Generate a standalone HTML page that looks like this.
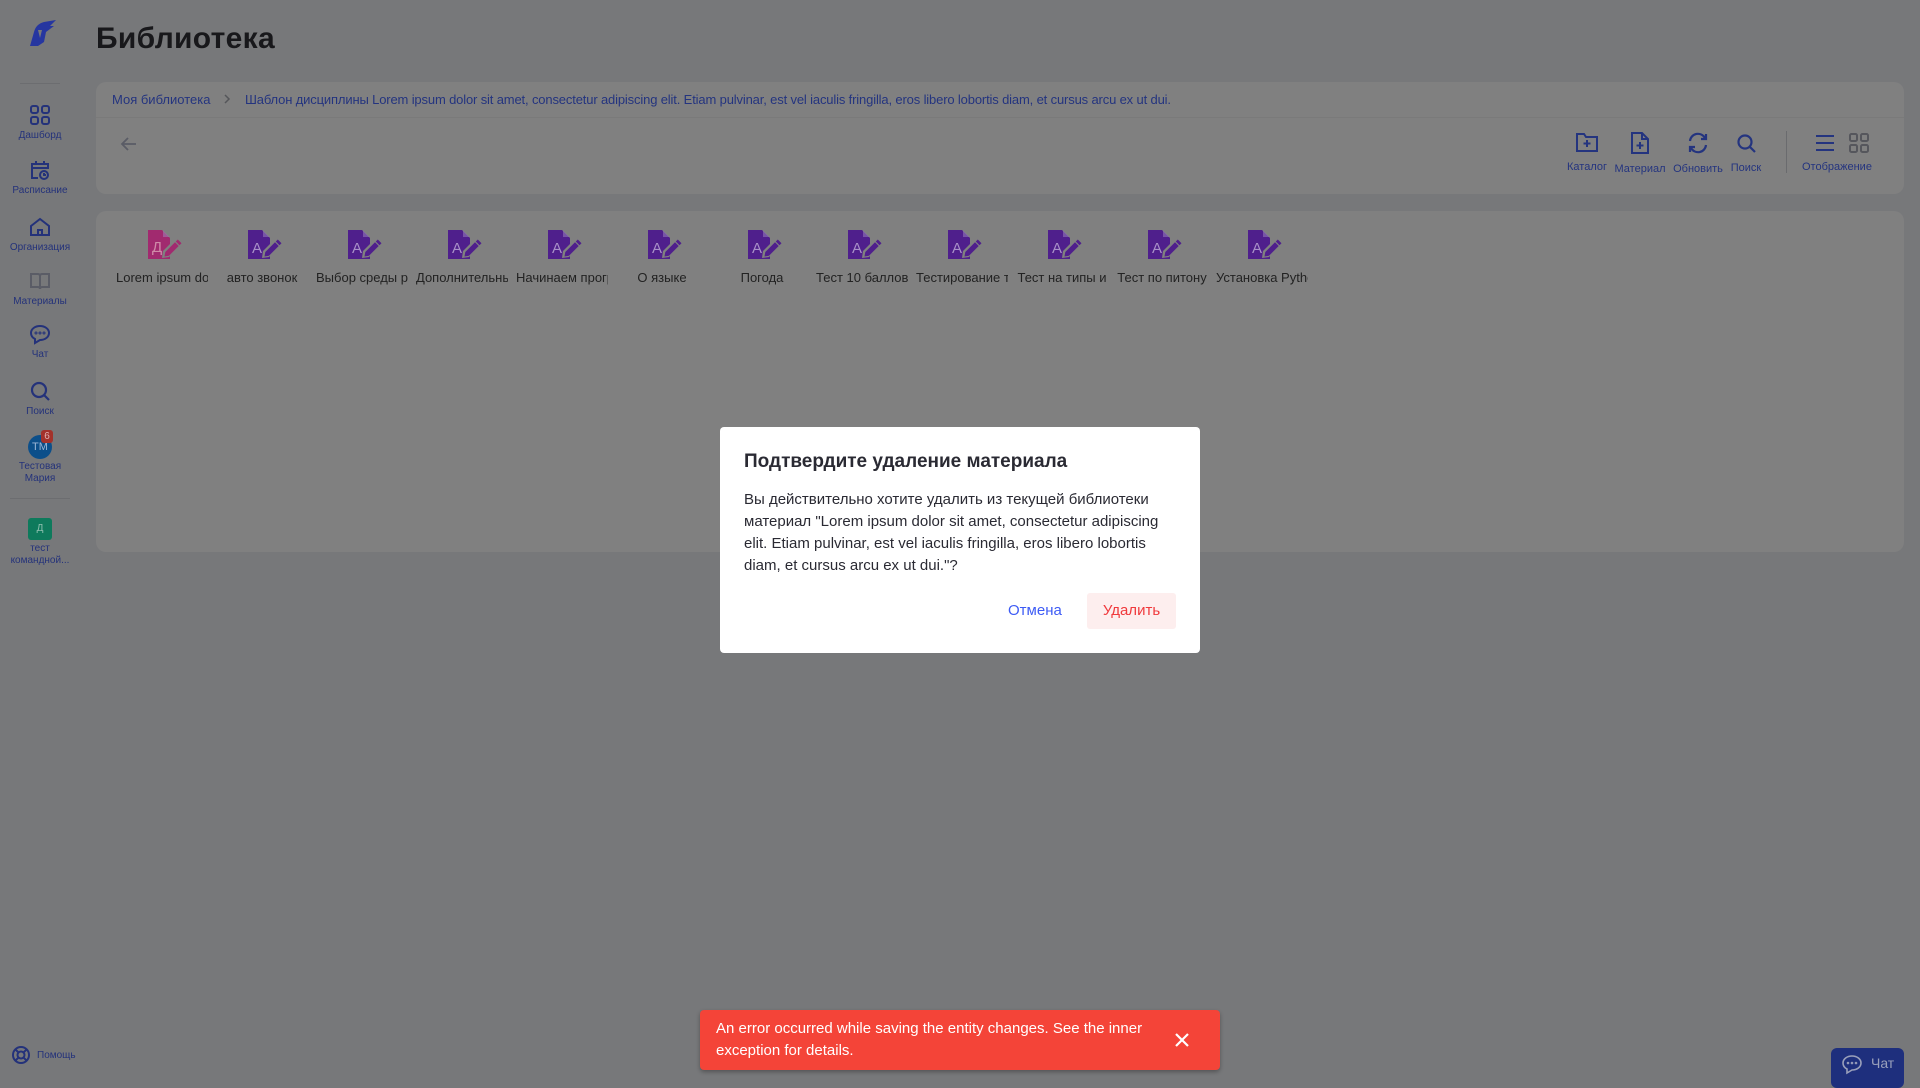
<!DOCTYPE html>
<html><head><meta charset="utf-8"><style>
*{box-sizing:border-box;margin:0;padding:0}
body{width:1920px;height:1080px;background:#77787a;font-family:"Liberation Sans","Noto Sans CJK SC",sans-serif;position:relative;overflow:hidden;color:#1b1b1f}
.abs{position:absolute}
.side{position:absolute;left:0;top:0;width:80px;height:1080px}
.si{position:absolute;left:0;width:80px;text-align:center;font-size:10px;color:#24327a}
.si svg{display:block;margin:0 auto 4px}
.card{position:absolute;left:96px;width:1808px;background:#808080;border-radius:10px}
.bc{position:absolute;top:92px;font-size:13px;color:#24347f}
.tb{position:absolute;top:130px;text-align:center;font-size:11px;color:#24347f}
.tb svg{display:block;margin:0 auto 8px}
.item{position:absolute;top:230px;width:96px;text-align:center}
.item svg{display:block;margin-left:34px}
.item .lbl{font-size:13px;color:#222;white-space:nowrap;overflow:hidden;width:92px;margin:10px auto 0}
</style></head><body>
<div class="side">
 <svg class="abs" style="left:24px;top:18px" width="34" height="30" viewBox="0 0 34 30"><path d="M6 28 L10 14 Q12 6 20 4 L32 2 L26 8 L30 8 L22 14 L20 24 L14 28 Z" fill="#2636a0"/><path d="M14 12 L18 12 L16 20Z" fill="#77787a"/></svg>
 <div class="abs" style="left:20px;top:83px;width:40px;height:1px;background:#6c6d70"></div>
 <div class="si" style="top:104px"><svg width="22" height="22" viewBox="0 0 22 22" fill="none" stroke="#24327a" stroke-width="2"><rect x="2" y="2" width="7" height="7" rx="2"/><rect x="13" y="2" width="7" height="7" rx="2"/><rect x="2" y="13" width="7" height="7" rx="2"/><rect x="13" y="13" width="7" height="7" rx="2"/></svg>Дашборд</div>
 <div class="si" style="top:159px"><svg width="22" height="22" viewBox="0 0 22 22" fill="none" stroke="#24327a" stroke-width="2"><path d="M9 19H3V5h16v5M3 9h16M7 2v4M15 2v4"/><circle cx="15" cy="16" r="4"/><path d="M15 14v2h2"/></svg>Расписание</div>
 <div class="si" style="top:216px"><svg width="22" height="22" viewBox="0 0 22 22" fill="none" stroke="#24327a" stroke-width="2"><path d="M2 10 L11 3 L20 10 V19 H2Z"/><path d="M9 19v-5h4v5"/></svg>Организация</div>
 <div class="si" style="top:270px"><svg width="22" height="22" viewBox="0 0 22 22" fill="none" stroke="#5a5c66" stroke-width="2"><path d="M2 4h7q2 0 2 2v13q0-2-2-2H2zM20 4h-7q-2 0-2 2v13q0-2 2-2h7z"/></svg>Материалы</div>
 <div class="si" style="top:323px"><svg width="22" height="22" viewBox="0 0 22 22" fill="none" stroke="#24327a" stroke-width="2"><path d="M11 3c5 0 9 3 9 7s-4 7-9 7l-5 3v-4c-2-1-4-3-4-6 0-4 4-7 9-7z"/><circle cx="7" cy="10" r=".5"/><circle cx="11" cy="10" r=".5"/><circle cx="15" cy="10" r=".5"/></svg>Чат</div>
 <div class="si" style="top:380px"><svg width="22" height="22" viewBox="0 0 22 22" fill="none" stroke="#24327a" stroke-width="2.2"><circle cx="10" cy="10" r="7"/><path d="M15 15l5 5"/></svg>Поиск</div>
 <div class="abs" style="left:28px;top:435px;width:24px;height:24px;border-radius:50%;background:#0c4f8a;color:#9cb6d6;font-size:11px;line-height:24px;text-align:center">ТМ</div>
 <div class="abs" style="left:41px;top:430px;width:12px;height:13px;border-radius:3px;background:#a3322b;color:#e0b0b0;font-size:10px;line-height:13px;text-align:center">6</div>
 <div class="si" style="top:461px;line-height:12px">Тестовая<br>Мария</div>
 <div class="abs" style="left:10px;top:498px;width:60px;height:1px;background:#6c6d70"></div>
 <div class="abs" style="left:28px;top:518px;width:24px;height:22px;border-radius:3px;background:#0e7a5c;color:#8fc0b0;font-size:10px;line-height:22px;text-align:center">Д</div>
 <div class="si" style="top:543px;line-height:12px">тест<br>командной...</div>
 <svg class="abs" style="left:11px;top:1045px" width="20" height="20" viewBox="0 0 20 20" fill="none" stroke="#24327a" stroke-width="2"><circle cx="10" cy="10" r="8"/><circle cx="10" cy="10" r="3.5"/><path d="M4 4l3.5 3.5M16 4l-3.5 3.5M4 16l3.5-3.5M16 16l-3.5-3.5"/></svg>
 <div class="abs" style="left:37px;top:1050px;font-size:10px;color:#24327a">Помощь</div>
</div>
<div class="abs" style="left:96px;top:22px;font-size:30px;font-weight:bold;color:#18181b;letter-spacing:0.3px">Библиотека</div>
<div class="card" style="top:82px;height:112px">
 <div class="abs" style="left:0;top:35px;width:1808px;height:1px;background:#7a7a7a"></div>
 <svg class="abs" style="left:24px;top:53px" width="18" height="18" viewBox="0 0 18 18" fill="none" stroke="#5a5c66" stroke-width="1.8"><path d="M16 9H2M8 3L2 9l6 6"/></svg>
</div>
<div class="bc" style="left:112px">Моя библиотека</div>
<svg class="abs" style="left:222px;top:93px" width="10" height="12" viewBox="0 0 10 12" fill="none" stroke="#55565a" stroke-width="1.5"><path d="M3 2l4 4-4 4"/></svg>
<div class="bc" style="left:245px;letter-spacing:-0.15px">Шаблон дисциплины Lorem ipsum dolor sit amet, consectetur adipiscing elit. Etiam pulvinar, est vel iaculis fringilla, eros libero lobortis diam, et cursus arcu ex ut dui.</div>
<div class="tb" style="left:1562px;width:50px;top:131px"><svg width="24" height="22" viewBox="0 0 24 22" fill="none" stroke="#24347f" stroke-width="2"><path d="M2 3h7l2 3h11v14H2z"/><path d="M12 9v7M8.5 12.5h7"/></svg>Каталог</div>
<div class="tb" style="left:1612px;width:56px;top:131px"><svg width="22" height="24" viewBox="0 0 22 24" fill="none" stroke="#24347f" stroke-width="2"><path d="M3 2h10l6 6v14H3z"/><path d="M13 2v6h6M11 11v7M7.5 14.5h7"/></svg>Материал</div>
<div class="tb" style="left:1672px;width:52px;top:131px"><svg width="26" height="24" viewBox="0 0 26 24" fill="none" stroke="#24347f" stroke-width="2.2"><path d="M5 10a8 8 0 0 1 15-3M21 14a8 8 0 0 1-15 3"/><path d="M21 3v5h-5M5 21v-5h5"/></svg>Обновить</div>
<div class="tb" style="left:1728px;width:36px;top:132px"><svg width="22" height="22" viewBox="0 0 22 22" fill="none" stroke="#24347f" stroke-width="2.2"><circle cx="10" cy="10" r="6.5"/><path d="M15 15l5 5"/></svg>Поиск</div>
<div class="abs" style="left:1786px;top:131px;width:1px;height:42px;background:#6a6b6e"></div>
<svg class="abs" style="left:1814px;top:133px" width="24" height="20" viewBox="0 0 24 20" stroke="#24347f" stroke-width="2"><path d="M2 3h18M2 10h18M2 17h18"/></svg>
<svg class="abs" style="left:1849px;top:133px" width="20" height="20" viewBox="0 0 20 20" fill="none" stroke="#55565c" stroke-width="2"><rect x="1" y="1" width="7" height="7" rx="1.5"/><rect x="12" y="1" width="7" height="7" rx="1.5"/><rect x="1" y="12" width="7" height="7" rx="1.5"/><rect x="12" y="12" width="7" height="7" rx="1.5"/></svg>
<div class="abs" style="left:1802px;top:161px;font-size:11px;color:#24347f">Отображение</div>
<div class="card" style="top:211px;height:341px"></div>
<svg width="0" height="0" style="position:absolute"><defs>
<symbol id="doc" viewBox="0 0 34 30"><path d="M0 0h14l8 8v21H0z" fill="currentColor"/><path d="M15 0.5l6.5 6.5h-6.5z" fill="#a08cc0" opacity=".5"/><path d="M14 28l1-7 12-12 6 6-12 12z" fill="#808080"/><path d="M16.5 26.5l0.8-4.5 9.7-9.7 3.7 3.7-9.7 9.7z M27.8 11.5l2-2 3.7 3.7-2 2z" fill="currentColor"/></symbol></defs></svg>
<div class="item" style="left:114px"><svg width="34" height="30" style="color:#a12a6f"><use href="#doc"/></svg><div style="position:absolute;left:38px;top:9px;font-size:15px;color:#cf8aa8">Д</div><div class="lbl">Lorem ipsum dolor</div></div>
<div class="item" style="left:214px"><svg width="34" height="30" style="color:#4f1f8c"><use href="#doc"/></svg><div style="position:absolute;left:38px;top:10px;font-size:15px;color:#a890c8">A</div><div class="lbl">авто звонок</div></div>
<div class="item" style="left:314px"><svg width="34" height="30" style="color:#4f1f8c"><use href="#doc"/></svg><div style="position:absolute;left:38px;top:10px;font-size:15px;color:#a890c8">A</div><div class="lbl">Выбор среды разработки</div></div>
<div class="item" style="left:414px"><svg width="34" height="30" style="color:#4f1f8c"><use href="#doc"/></svg><div style="position:absolute;left:38px;top:10px;font-size:15px;color:#a890c8">A</div><div class="lbl">Дополнительные</div></div>
<div class="item" style="left:514px"><svg width="34" height="30" style="color:#4f1f8c"><use href="#doc"/></svg><div style="position:absolute;left:38px;top:10px;font-size:15px;color:#a890c8">A</div><div class="lbl">Начинаем программировать</div></div>
<div class="item" style="left:614px"><svg width="34" height="30" style="color:#4f1f8c"><use href="#doc"/></svg><div style="position:absolute;left:38px;top:10px;font-size:15px;color:#a890c8">A</div><div class="lbl">О языке</div></div>
<div class="item" style="left:714px"><svg width="34" height="30" style="color:#4f1f8c"><use href="#doc"/></svg><div style="position:absolute;left:38px;top:10px;font-size:15px;color:#a890c8">A</div><div class="lbl">Погода</div></div>
<div class="item" style="left:814px"><svg width="34" height="30" style="color:#4f1f8c"><use href="#doc"/></svg><div style="position:absolute;left:38px;top:10px;font-size:15px;color:#a890c8">A</div><div class="lbl">Тест 10 баллов</div></div>
<div class="item" style="left:914px"><svg width="34" height="30" style="color:#4f1f8c"><use href="#doc"/></svg><div style="position:absolute;left:38px;top:10px;font-size:15px;color:#a890c8">A</div><div class="lbl">Тестирование текста</div></div>
<div class="item" style="left:1014px"><svg width="34" height="30" style="color:#4f1f8c"><use href="#doc"/></svg><div style="position:absolute;left:38px;top:10px;font-size:15px;color:#a890c8">A</div><div class="lbl">Тест на типы и</div></div>
<div class="item" style="left:1114px"><svg width="34" height="30" style="color:#4f1f8c"><use href="#doc"/></svg><div style="position:absolute;left:38px;top:10px;font-size:15px;color:#a890c8">A</div><div class="lbl">Тест по питону</div></div>
<div class="item" style="left:1214px"><svg width="34" height="30" style="color:#4f1f8c"><use href="#doc"/></svg><div style="position:absolute;left:38px;top:10px;font-size:15px;color:#a890c8">A</div><div class="lbl">Установка Python</div></div>

<div class="abs" style="left:720px;top:427px;width:480px;height:226px;background:#fff;border-radius:4px">
 <div class="abs" style="left:24px;top:24px;font-size:19px;font-weight:bold;color:#2a2a33">Подтвердите удаление материала</div>
 <div class="abs" style="left:24px;top:62px;width:460px;font-size:15px;line-height:22px;color:#2a2a33;white-space:nowrap">Вы действительно хотите удалить из текущей библиотеки<br>материал "Lorem ipsum dolor sit amet, consectetur adipiscing<br>elit. Etiam pulvinar, est vel iaculis fringilla, eros libero lobortis<br>diam, et cursus arcu ex ut dui."?</div>
 <div class="abs" style="left:288px;top:175px;font-size:15px;color:#3d5bf5">Отмена</div>
 <div class="abs" style="left:367px;top:166px;width:89px;height:36px;background:#fdeeee;border-radius:3px;font-size:15px;color:#f0393c;text-align:center;line-height:36px">Удалить</div>
</div>
<div class="abs" style="left:700px;top:1010px;width:520px;height:60px;background:#f44438;border-radius:4px;box-shadow:0 2px 4px rgba(0,0,0,.3)">
 <div class="abs" style="left:16px;top:8px;width:440px;font-size:15px;line-height:22px;color:#fff">An error occurred while saving the entity changes. See the inner exception for details.</div>
 <svg class="abs" style="left:474px;top:22px" width="16" height="16" viewBox="0 0 16 16" stroke="#fff" stroke-width="2.2"><path d="M2 2l12 12M14 2L2 14"/></svg>
</div>
<div class="abs" style="left:1831px;top:1048px;width:73px;height:40px;background:#1e2f7d;border-radius:6px">
 <svg class="abs" style="left:10px;top:5px" width="22" height="22" viewBox="0 0 22 22" fill="none" stroke="#9aa0bb" stroke-width="1.6"><path d="M11 3c5 0 9 3 9 7s-4 7-9 7l-5 3v-4c-2-1-4-3-4-6 0-4 4-7 9-7z"/><circle cx="7" cy="10" r=".5"/><circle cx="11" cy="10" r=".5"/><circle cx="15" cy="10" r=".5"/></svg>
 <div class="abs" style="left:40px;top:7px;font-size:14px;color:#9aa0bb">Чат</div>
</div>
</body></html>
